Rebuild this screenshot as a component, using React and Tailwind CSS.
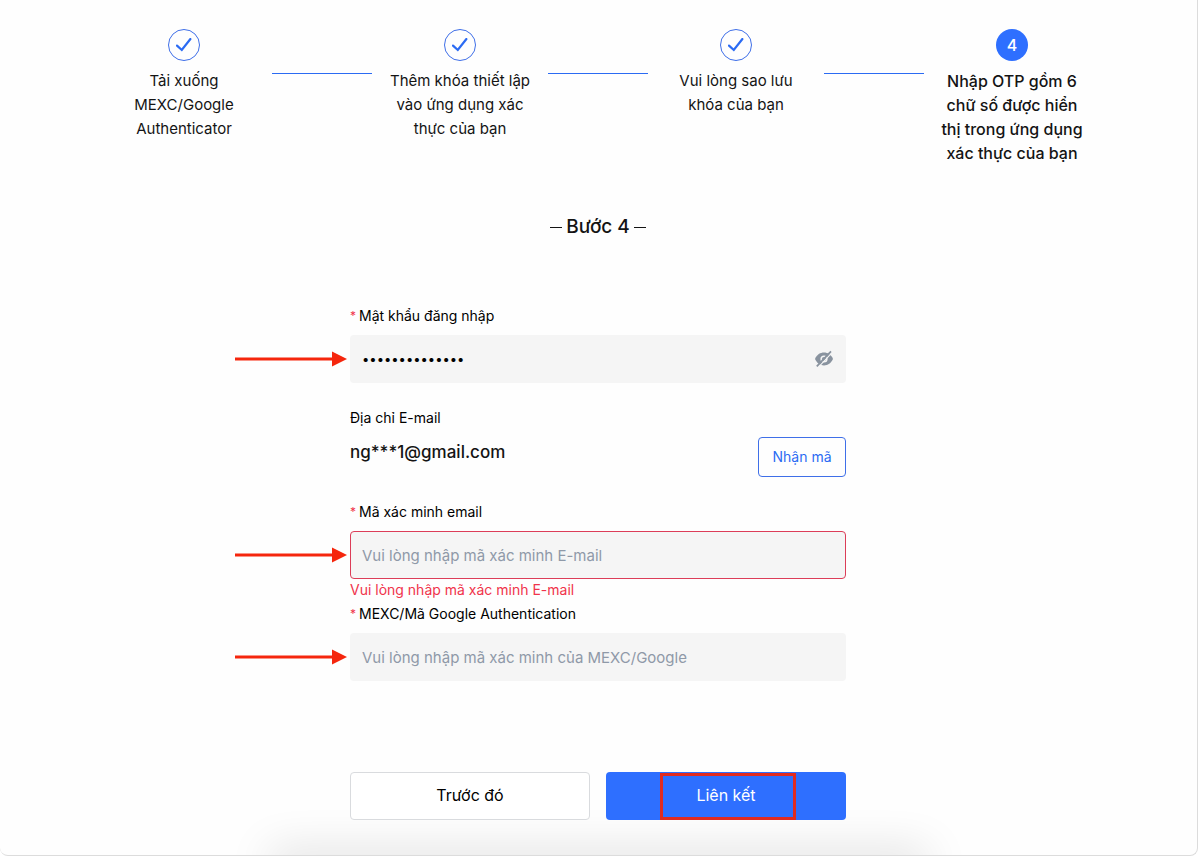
import { useState } from 'react';

const STEPS = [
  'Tải xuống MEXC/Google Authenticator',
  'Thêm khóa thiết lập vào ứng dụng xác thực của bạn',
  'Vui lòng sao lưu khóa của bạn',
  'Nhập OTP gồm 6 chữ số được hiển thị trong ứng dụng xác thực của bạn',
];

function CheckIcon() {
  return (
    <svg width="16" height="14" viewBox="0 0 16 14" fill="none" aria-hidden="true">
      <path d="M1 7.6 L5.8 12 L14.4 1" stroke="#2b6bf3" strokeWidth="2.2" strokeLinecap="round" />
    </svg>
  );
}

function EyeOffIcon() {
  return (
    <svg width="20" height="18" viewBox="0 0 20 18" aria-hidden="true">
      <path d="M1 9 C3 4.6 6.2 2.6 10 2.6 S17 4.6 19 9 C17 13.4 13.8 15.4 10 15.4 S3 13.4 1 9Z" fill="#89939f" />
      <circle cx="10" cy="9" r="3.6" fill="#f5f5f5" />
      <circle cx="10" cy="9" r="2.1" fill="#89939f" />
      <path d="M4.2 17.4 L18.2 2.4" stroke="#f5f5f5" strokeWidth="1.2" />
      <path d="M2.8 16.4 L17 1.4" stroke="#89939f" strokeWidth="1.8" />
    </svg>
  );
}

// Red pointer sitting to the left of a field
function Arrow() {
  return (
    <svg
      className="absolute right-full top-1/2 mr-[3px] -translate-y-1/2"
      width="112"
      height="16"
      viewBox="0 0 112 16"
      aria-hidden="true"
    >
      <path d="M0 8H99" stroke="#f5260d" strokeWidth="3" />
      <path d="M97 0.5L112 8L97 15.5Z" fill="#f5260d" />
    </svg>
  );
}

function Label({ htmlFor, children }) {
  return (
    <label htmlFor={htmlFor} className="flex text-sm leading-6 text-black">
      <span className="w-[9px] text-xs leading-6 text-[#f0334b]">*</span>
      {children}
    </label>
  );
}

function Stepper({ current }) {
  return (
    <ol className="flex justify-center gap-4">
      {STEPS.map((text, i) => {
        const active = i + 1 === current;
        return (
          <li key={text} className="flex gap-4">
            {i > 0 && <span className="mt-11 h-px w-[100px] bg-[#2b6bf3]" />}
            <div className="flex w-36 flex-col items-center gap-2">
              {active ? (
                <span className="flex size-8 items-center justify-center rounded-full bg-[#2e6fff] font-medium text-white">
                  {i + 1}
                </span>
              ) : (
                <span className="flex size-8 items-center justify-center rounded-full border border-[#3f6fe8]">
                  <CheckIcon />
                </span>
              )}
              <p className={`text-center leading-6 ${active ? 'font-medium' : 'text-[15px]'}`}>{text}</p>
            </div>
          </li>
        );
      })}
    </ol>
  );
}

export default function App() {
  const [password, setPassword] = useState('matkhau1234567');
  const [showPw, setShowPw] = useState(false);
  const [emailCode, setEmailCode] = useState('');
  const [authCode, setAuthCode] = useState('');

  const inputCls =
    'h-12 w-full rounded-sm bg-[#f5f5f5] text-black placeholder:text-[#8f99a8] outline-none';

  return (
    <main className="relative mr-px overflow-hidden rounded-b-lg border-r border-b border-[#dcdcdc] bg-[#fefefe] pt-[29px] pr-[17px] pb-[35px] pl-4 font-[Inter,sans-serif] text-base text-[#141414]">
      {/* soft shadow coming up from the bottom edge */}
      <div className="pointer-events-none absolute inset-x-0 top-full mx-auto h-4 max-w-[650px] shadow-[0_0_44px_4px_rgba(0,0,0,0.15)]" />

      <Stepper current={4} />

      <h1 className="mt-12 flex items-center justify-center gap-1 text-[19px] leading-7 font-medium">
        <span className="h-px w-3 bg-[#141414]" />
        Bước 4
        <span className="h-px w-3 bg-[#141414]" />
      </h1>

      <form className="relative mx-auto mt-[63px] max-w-[496px]" onSubmit={(e) => e.preventDefault()}>
        <Label htmlFor="password">Mật khẩu đăng nhập</Label>
        <div className="relative mt-[7px]">
          <Arrow />
          <input
            id="password"
            type={showPw ? 'text' : 'password'}
            value={password}
            onChange={(e) => setPassword(e.target.value)}
            className={`${inputCls} pr-12 pl-3 text-[13px]`}
          />
          <button
            type="button"
            aria-label="Hiện mật khẩu"
            onClick={() => setShowPw(!showPw)}
            className="absolute inset-y-0 right-3"
          >
            <EyeOffIcon />
          </button>
        </div>

        <div className="mt-[23px] flex justify-between">
          <div>
            <p className="text-sm leading-6 text-black">Địa chỉ E-mail</p>
            <p className="mt-2 text-[17px] leading-7 font-medium">ng***1@gmail.com</p>
          </div>
          <button type="button" className="mt-[31px] h-10 w-[88px] rounded-sm border border-[#3f6fe8] text-sm text-[#2b6bf3]">
            Nhận mã
          </button>
        </div>

        <div className="mt-[23px]">
          <Label htmlFor="email-code">Mã xác minh email</Label>
          <div className="relative mt-[7px]">
            <Arrow />
            <input
              id="email-code"
              value={emailCode}
              onChange={(e) => setEmailCode(e.target.value)}
              placeholder="Vui lòng nhập mã xác minh E-mail"
              className={`${inputCls} border border-[#dc3d58] px-[11px] text-[15px]`}
            />
          </div>
          {!emailCode && <p className="mb-px text-sm leading-[22px] text-[#f0334b]">Vui lòng nhập mã xác minh E-mail</p>}
        </div>

        <Label htmlFor="auth-code">MEXC/Mã Google Authentication</Label>
        <div className="relative mt-[7px]">
          <Arrow />
          <input
            id="auth-code"
            value={authCode}
            onChange={(e) => setAuthCode(e.target.value)}
            placeholder="Vui lòng nhập mã xác minh của MEXC/Google"
            className={`${inputCls} px-3 text-[15px]`}
          />
        </div>

        <div className="mt-[91px] grid grid-cols-2 gap-4">
          <button type="button" className="h-12 rounded-sm border border-[#d9dbde] bg-white pb-0.5 text-black">
            Trước đó
          </button>
          <button type="submit" className="relative h-12 rounded-sm bg-[#2e6fff] pb-0.5 text-white">
            Liên kết
            <span className="absolute top-px bottom-0 left-[54px] w-[136px] border-3 border-[#e02b20]" />
          </button>
        </div>
      </form>
    </main>
  );
}
